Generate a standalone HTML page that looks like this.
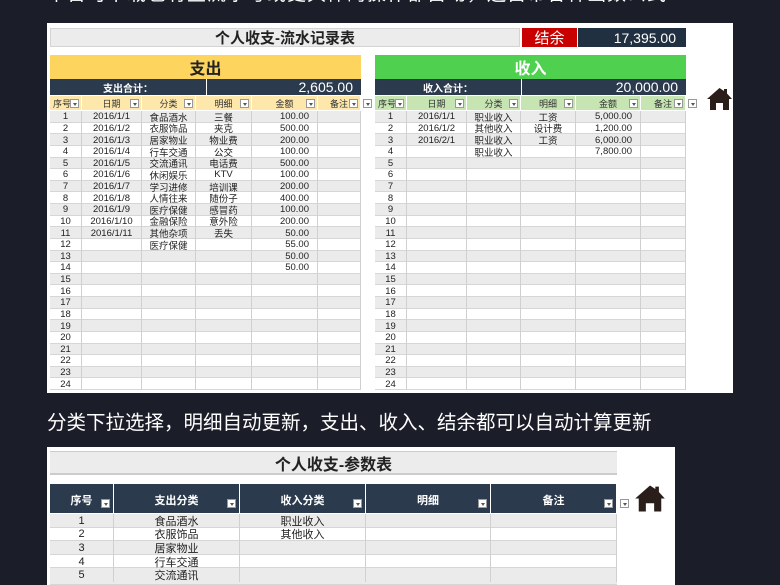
<!DOCTYPE html>
<html style="overflow:hidden;height:585px"><head><meta charset="utf-8">
<style>
*{margin:0;padding:0;box-sizing:border-box}
body{width:780px;height:585px;overflow:hidden;background:#1b1e29;font-family:"Liberation Sans","Noto Sans CJK SC",sans-serif;position:relative}
.a{position:absolute}
.c{position:absolute;display:flex;align-items:center;justify-content:center;white-space:nowrap;overflow:hidden}
.dd{position:absolute;width:9px;height:9px;background:#fff;border:1px solid #999}
.dd:after{content:"";position:absolute;left:2px;top:3px;border-left:2px solid transparent;border-right:2px solid transparent;border-top:3px solid #555}
</style></head><body>
<div class="a" style="left:47px;top:-21px;color:#fff;font-size:19px;letter-spacing:1px;white-space:nowrap">平台可下载也有些流水号或更具体的操作都自动，还自带各种函数公式</div>
<div class="a" style="left:47px;top:23px;width:686px;height:370px;background:#fff"></div>
<div class="c" style="left:50px;top:28px;width:470px;height:19px;background:#ececec;border:1px solid #d4d4d4;font-size:15px;font-weight:bold;color:#222">个人收支-流水记录表</div>
<div class="c" style="left:522px;top:28px;width:55px;height:19px;background:#c80000;color:#fff;font-size:15px">结余</div>
<div class="c" style="left:578px;top:28px;width:108px;height:19px;background:#213040;color:#fff;font-size:14px;justify-content:flex-end;padding-right:10px">17,395.00</div>
<div class="c" style="left:50px;top:55px;width:311px;height:24px;background:#fdd55e;font-size:16px;font-weight:bold;color:#222">支出</div>
<div class="c" style="left:50px;top:79px;width:156px;height:16px;background:#2b3a4d;color:#fff;font-size:10px;font-weight:bold">支出合计：</div>
<div class="c" style="left:207px;top:79px;width:154px;height:16px;background:#2b3a4d;color:#fff;font-size:14px;justify-content:flex-end;padding-right:8px">2,605.00</div>
<div class="c" style="left:375px;top:55px;width:311px;height:24px;background:#4fd14f;font-size:16px;font-weight:bold;color:#fff">收入</div>
<div class="c" style="left:375px;top:79px;width:146px;height:16px;background:#2b3a4d;color:#fff;font-size:10px;font-weight:bold">收入合计：</div>
<div class="c" style="left:522px;top:79px;width:164px;height:16px;background:#2b3a4d;color:#fff;font-size:14px;justify-content:flex-end;padding-right:8px">20,000.00</div>
<svg class="a" style="left:706px;top:87px" width="27" height="24" viewBox="0 0 27 24"><path d="M13.5 1L1 12h3v11h6v-7h7v7h6V12h3L21 6.5V2h-3v2z" fill="#2a1e1a"/></svg>
<div class="c" style="left:47px;top:406px;color:#fff;font-size:19.5px">分类下拉选择，明细自动更新，支出、收入、结余都可以自动计算更新</div>
<div class="a" style="left:47px;top:447px;width:628px;height:138px;background:#fff"></div>
<svg class="a" style="left:634px;top:484px" width="32" height="29" viewBox="0 0 27 24"><path d="M13.5 1L1 12h3v11h6v-7h7v7h6V12h3L21 6.5V2h-3v2z" fill="#2a1e1a"/></svg>
<div class="c" style="left:50px;top:451px;width:567px;height:24px;background:#ececec;border-top:1px solid #ccc;border-bottom:2px solid #ccc;font-size:16px;font-weight:bold;color:#222">个人收支-参数表</div>
<div id="g"></div>
<script>
var g=document.getElementById('g'),h='';
function cell(x,y,w,hh,t,st){h+='<div class="c" style="left:'+x+'px;top:'+y+'px;width:'+w+'px;height:'+hh+'px;'+st+'">'+t+'</div>';}
function dd(x,y){h+='<div class="dd" style="left:'+x+'px;top:'+y+'px"></div>';}
var L=[50,82,142,196,252,318,361],R=[375,407,467,521,576,641,686];
var hd=['序号','日期','分类','明细','金额','备注'];
var ex=[['1','2016/1/1','食品酒水','三餐','100.00'],['2','2016/1/2','衣服饰品','夹克','500.00'],['3','2016/1/3','居家物业','物业费','200.00'],['4','2016/1/4','行车交通','公交','100.00'],['5','2016/1/5','交流通讯','电话费','500.00'],['6','2016/1/6','休闲娱乐','KTV','100.00'],['7','2016/1/7','学习进修','培训课','200.00'],['8','2016/1/8','人情往来','随份子','400.00'],['9','2016/1/9','医疗保健','感冒药','100.00'],['10','2016/1/10','金融保险','意外险','200.00'],['11','2016/1/11','其他杂项','丢失','50.00'],['12','','医疗保健','','55.00'],['13','','','','50.00'],['14','','','','50.00']];
var inc=[['1','2016/1/1','职业收入','工资','5,000.00'],['2','2016/1/2','其他收入','设计费','1,200.00'],['3','2016/2/1','职业收入','工资','6,000.00'],['4','','职业收入','','7,800.00']];
function tbl(C,hbg,data){
 for(var i=0;i<6;i++){cell(C[i],96,C[i+1]-C[i],14,hd[i],'background:'+hbg+';font-size:9px;color:#333;border-right:1px solid #fff;justify-content:'+(i==0?'flex-start;padding-left:3px':'center'));dd(C[i+1]-12,99);}
 dd(C[6]+2,99);
 var rh=(390-111)/24;
 for(var r=0;r<24;r++){var y=111+r*rh;var bg=r%2==0?'#ebebeb':'#fff';
  h+='<div class="a" style="left:'+C[0]+'px;top:'+y+'px;width:'+(C[6]-C[0])+'px;height:'+rh+'px;background:'+bg+';border-bottom:1px solid #d6d6d6"></div>';
  var d=data[r]||[String(r+1),'','','',''];
  for(var i=0;i<6;i++){var t=d[i]||'';
   cell(C[i],y,C[i+1]-C[i],rh,t,'font-size:9.5px;color:#222;border-right:1px solid #d0d0d0;'+(i==4?'justify-content:flex-end;padding-right:8px;':''));}
 }
}
tbl(L,'#fde7ab',ex);tbl(R,'#c6e5b3',inc);
var B=[50,114,240,366,491,617],bh=['序号','支出分类','收入分类','明细','备注'];
for(var i=0;i<5;i++){cell(B[i],484,B[i+1]-B[i],29,bh[i],'background:#2b3a4d;color:#fff;font-size:11px;font-weight:bold;border-right:1px solid #fff;align-items:flex-start;padding-top:8px');dd(B[i+1]-13,499);}
dd(620,499);
var e1=['食品酒水','衣服饰品','居家物业','行车交通','交流通讯'],e2=['职业收入','其他收入'];
for(var r=0;r<5;r++){var y=514+r*13.6;var bg=r%2==0?'#ebebeb':'#fff';
 var hh=r==4?585-y:13.6;
 h+='<div class="a" style="left:50px;top:'+y+'px;width:567px;height:'+hh+'px;background:'+bg+';border-bottom:1px solid #d6d6d6"></div>';
 var d=[String(r+1),e1[r],e2[r]||'','',''];
 for(var i=0;i<5;i++)cell(B[i],y,B[i+1]-B[i],13.6,d[i],'font-size:11px;color:#222;border-right:1px solid #d0d0d0');}
g.innerHTML=h;
</script>
</body></html>
